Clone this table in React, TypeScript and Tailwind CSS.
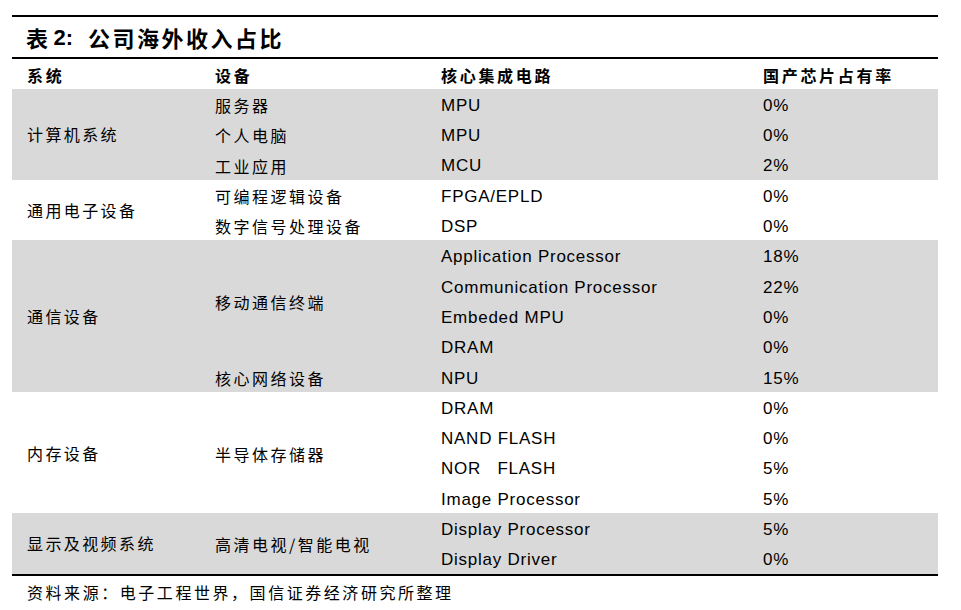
import React from "react";

type Device = { name: string; span: 1 | 4 | 5 | 2 };
type Group = { sys: string; gray: boolean; devices: Device[]; chips: [string, string][] };

const groups: Group[] = [
  {
    sys: "计算机系统",
    gray: true,
    devices: [
      { name: "服务器", span: 1 },
      { name: "个人电脑", span: 1 },
      { name: "工业应用", span: 1 },
    ],
    chips: [
      ["MPU", "0%"],
      ["MPU", "0%"],
      ["MCU", "2%"],
    ],
  },
  {
    sys: "通用电子设备",
    gray: false,
    devices: [
      { name: "可编程逻辑设备", span: 1 },
      { name: "数字信号处理设备", span: 1 },
    ],
    chips: [
      ["FPGA/EPLD", "0%"],
      ["DSP", "0%"],
    ],
  },
  {
    sys: "通信设备",
    gray: true,
    devices: [
      { name: "移动通信终端", span: 4 },
      { name: "核心网络设备", span: 1 },
    ],
    chips: [
      ["Application Processor", "18%"],
      ["Communication Processor", "22%"],
      ["Embeded MPU", "0%"],
      ["DRAM", "0%"],
      ["NPU", "15%"],
    ],
  },
  {
    sys: "内存设备",
    gray: false,
    devices: [{ name: "半导体存储器", span: 4 }],
    chips: [
      ["DRAM", "0%"],
      ["NAND FLASH", "0%"],
      ["NOR   FLASH", "5%"],
      ["Image Processor", "5%"],
    ],
  },
  {
    sys: "显示及视频系统",
    gray: true,
    devices: [{ name: "高清电视/智能电视", span: 2 }],
    chips: [
      ["Display Processor", "5%"],
      ["Display Driver", "0%"],
    ],
  },
];

const spanHeight: Record<number, string> = {
  1: "h-[30.3px]",
  2: "h-[60.6px]",
  4: "h-[121.2px]",
  5: "h-[151.5px]",
};

const cjk = "font-['Noto_Sans_CJK_SC',sans-serif]";
const latin = "font-['Liberation_Sans','Noto_Sans_CJK_SC',sans-serif]";

function GroupBlock({ g }: { g: Group }) {
  return (
    <div className={`flex ${g.gray ? "bg-[#d9d9d9]" : "bg-white"}`}>
      <div className={`w-[203px] pl-[15px] flex items-center text-[16px] tracking-[2.4px] ${cjk}`}>
        {g.sys}
      </div>
      <div className="w-[226px] flex flex-col">
        {g.devices.map((d, i) => (
          <div
            key={i}
            className={`${spanHeight[d.span]} flex items-center pt-[2px] text-[16px] tracking-[2.5px] ${cjk}`}
          >
            {d.name}
          </div>
        ))}
      </div>
      <div className="flex flex-col">
        {g.chips.map(([chip, pct], i) => (
          <div key={i} className={`h-[30.3px] flex items-center pt-[3px] text-[17px] tracking-[0.75px] ${latin}`}>
            <span className="w-[322px] whitespace-pre">{chip}</span>
            <span className="w-[175px]">{pct}</span>
          </div>
        ))}
      </div>
    </div>
  );
}

export default function App() {
  return (
    <div className="w-[961px] h-[610px] bg-white text-black">
      <div className="ml-[12px] w-[926px] pt-[15px]">
        <div className="h-[2px] bg-black" />
        <div className={`h-[40px] flex items-center pt-[1px] pl-[14px] text-[22px] font-bold tracking-[2.5px] ${cjk}`}>
          <span>表</span>
          <span className={`${latin} tracking-normal ml-[3px]`}>2:</span>
          <span className="ml-[15px]">公司海外收入占比</span>
        </div>
        <div className="h-[2px] bg-black" />
        <div className={`h-[30px] flex items-center pt-[1px] text-[16px] font-bold tracking-[2.7px] ${cjk}`}>
          <div className="w-[203px] pl-[15px]">系统</div>
          <div className="w-[226px]">设备</div>
          <div className="w-[322px]">核心集成电路</div>
          <div className="w-[175px]">国产芯片占有率</div>
        </div>
        {groups.map((g, i) => (
          <GroupBlock key={i} g={g} />
        ))}
        <div className="h-[2px] bg-black" />
        <div className={`pt-[4px] pl-[15px] text-[16px] tracking-[2.55px] ${cjk}`}>
          资料来源：电子工程世界，国信证券经济研究所整理
        </div>
      </div>
    </div>
  );
}
